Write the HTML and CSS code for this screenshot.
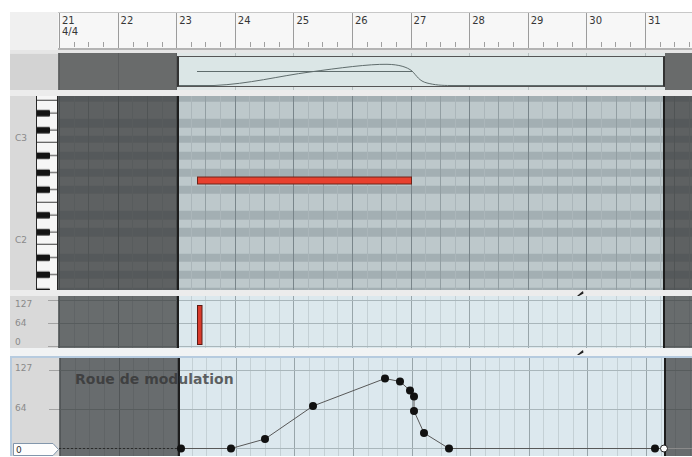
FILE: index.html
```html
<!DOCTYPE html>
<html lang="fr">
<head>
    <meta charset="UTF-8">
    <meta name="viewport" content="width=device-width, initial-scale=1.0">
    <title>Éditeur de pistes</title>
    <link rel="stylesheet" href="styles.css">
</head>
<body>
    <div class="editor">

        <!-- Bar ruler -->
        <div class="lane ruler-lane">
            <div class="lane-head"></div>
            <div class="lane-body ruler">
                <div class="bar"><span>21</span><span>4/4</span></div>
                <div class="bar"><span>22</span></div>
                <div class="bar"><span>23</span></div>
                <div class="bar"><span>24</span></div>
                <div class="bar"><span>25</span></div>
                <div class="bar"><span>26</span></div>
                <div class="bar"><span>27</span></div>
                <div class="bar"><span>28</span></div>
                <div class="bar"><span>29</span></div>
                <div class="bar"><span>30</span></div>
                <div class="bar"><span>31</span></div>
            </div>
        </div>
        <div class="divider ruler-edge"></div>

        <!-- Region overview -->
        <div class="lane overview-lane">
            <div class="lane-head"></div>
            <div class="lane-body">
                <div class="outside before"></div>
                <div class="inside">
                    <svg viewBox="0 0 484 29" preserveAspectRatio="none">
                        <path d="M18 14.5H233" fill="none" stroke="#5f6c6c" stroke-width="1"/>
                        <path d="M0 28.5H35C70 27 100 19 131 15C160 11 190 7 208 7.3C220 7.5 228 10 233 14C238 19 240 24 248 26C256 28 262 28.5 272 28.5H484" fill="none" stroke="#5f6c6c" stroke-width="1"/>
                    </svg>
                </div>
                <div class="outside after"></div>
            </div>
        </div>
        <div class="divider"></div>

        <!-- Piano roll -->
        <div class="lane roll-lane">
            <div class="lane-head">
                <div class="key-names">
                    <span>C3</span>
                    <span>C2</span>
                </div>
                <svg class="keys" width="22" height="194">
                    <defs>
                        <pattern id="octave" width="22" height="102" y="46.75" patternUnits="userSpaceOnUse">
                            <rect width="22" height="102" fill="#f6f6f6"/>
                            <path d="M0 59.5H22M0 101.5H22" stroke="#3a3a3a" stroke-width="1"/>
                            <path d="M14 12.75H22M14 29.75H22M14 46.75H22M14 72.25H22M14 89.25H22" stroke="#3a3a3a" stroke-width="1"/>
                            <g fill="#141414">
                                <rect y="9.75" width="14" height="6.5" rx="1"/>
                                <rect y="26.75" width="14" height="6.5" rx="1"/>
                                <rect y="43.75" width="14" height="6.5" rx="1"/>
                                <rect y="69.25" width="14" height="6.5" rx="1"/>
                                <rect y="86.25" width="14" height="6.5" rx="1"/>
                            </g>
                        </pattern>
                    </defs>
                    <rect width="22" height="194" fill="url(#octave)"/>
                    <path d="M0.5 0V194M21.5 0V194" stroke="#262626" stroke-width="1"/>
                </svg>
            </div>
            <div class="lane-body">
                <div class="outside before"></div>
                <div class="inside">
                    <svg viewBox="0 0 484 194" preserveAspectRatio="none">
                        <rect class="note" x="18.5" y="81" width="214" height="7"/>
                    </svg>
                </div>
                <div class="outside after"></div>
            </div>
        </div>
        <div class="divider">
            <svg class="grip" width="7" height="5"><path d="M0 5L4 1.5L6 0L6.5 2.5L2 5Z"/></svg>
        </div>

        <!-- Velocity -->
        <div class="lane velocity-lane">
            <div class="lane-head value-scale">
                <span>127</span>
                <span>64</span>
                <span>0</span>
            </div>
            <div class="lane-body">
                <div class="outside before"></div>
                <div class="inside">
                    <svg viewBox="0 0 484 52" preserveAspectRatio="none">
                        <rect class="velocity" x="18.5" y="9.5" width="4.5" height="39"/>
                    </svg>
                </div>
                <div class="outside after"></div>
            </div>
        </div>
        <div class="divider tall">
            <svg class="grip" width="7" height="5"><path d="M0 5L4 1.5L6 0L6.5 2.5L2 5Z"/></svg>
        </div>

        <!-- Modulation wheel automation -->
        <div class="lane mod-lane">
            <div class="lane-head">
                <span class="level top">127</span>
                <span class="level">64</span>
                <svg class="value-tag" width="46" height="13">
                    <path d="M0.5 0.5H40L45.5 6.5L40 12.5H0.5Z" fill="#fdfdfd" stroke="#8296ab"/>
                    <text x="3" y="10">0</text>
                </svg>
            </div>
            <div class="lane-body">
                <div class="outside before"></div>
                <div class="inside"></div>
                <div class="outside after"></div>
                <div class="lane-title">Roue de modulation</div>
                <svg class="automation" width="634" height="98">
                    <path d="M0 90.5H122" stroke="#2a2a2a" stroke-dasharray="2 2" fill="none"/>
                    <path d="M605 90.5H634" stroke="#8a8a8a" fill="none"/>
                    <polyline points="122,90.5 172,90.5 206,81 254,48 326,20.5 341,23.5 351,32.5 355,38.5 355,53 365,75 390,90.5 596,90.5 605,90.5" fill="none" stroke="#585858" stroke-width="1"/>
                    <g fill="#111">
                        <circle cx="122" cy="90.5" r="4"/>
                        <circle cx="172" cy="90.5" r="4"/>
                        <circle cx="206" cy="81" r="4"/>
                        <circle cx="254" cy="48" r="4"/>
                        <circle cx="326" cy="20.5" r="4"/>
                        <circle cx="341" cy="23.5" r="4"/>
                        <circle cx="351" cy="32.5" r="4"/>
                        <circle cx="355" cy="38.5" r="4"/>
                        <circle cx="355" cy="53" r="4"/>
                        <circle cx="365" cy="75" r="4"/>
                        <circle cx="390" cy="90.5" r="4"/>
                        <circle cx="596" cy="90.5" r="4"/>
                    </g>
                    <circle cx="605" cy="90.5" r="3.5" fill="#fff" stroke="#222"/>
                </svg>
            </div>
        </div>
    </div>
</body>
</html>
```

FILE: styles.css
```css
:root {
    --shade: rgba(48, 48, 48, 0.68);
    --edge: #1d1d1d;
    --label: #8a8a8a;
    --head: #d9d9d9;
}

html, body {
    margin: 0;
    overflow: hidden;
    background: #fff;
    font-family: 'DejaVu Sans', 'Liberation Sans', sans-serif;
}

.editor {
    width: 682px;
    height: 445px;
    padding: 12px 0 0 10px;
}

.lane {
    display: flex;
}

.lane-head {
    flex: 0 0 48px;
    box-sizing: border-box;
    background: var(--head);
}

.lane-body {
    flex: 1;
    display: flex;
    position: relative;
    overflow: hidden;
}

.outside {
    background: var(--shade);
}

.outside.before { flex: 0 0 119px; }
.outside.after { flex: 1; }

.inside {
    flex: 0 0 488px;
    box-sizing: border-box;
    border-left: 2px solid var(--edge);
    border-right: 2px solid var(--edge);
}

.inside svg {
    display: block;
    width: 100%;
    height: 100%;
}

.divider {
    height: 6px;
    background: #ececec;
    display: flex;
    align-items: center;
}

.grip {
    margin-left: 567px;
    fill: #222;
}

/* ruler */
.ruler-lane {
    height: 38px;
}

.ruler-lane .lane-head {
    background: #f0f0f0;
}

.ruler {
    box-sizing: border-box;
    padding-left: 1px;
    background: #f7f7f7;
    border-top: 1px solid #c8c8c8;
    border-bottom: 2px solid #b4b4b4;
}

.bar {
    flex: 0 0 58.6px;
    box-sizing: border-box;
    border-left: 1px solid #9c9c9c;
    padding: 2px 0 0 2px;
    display: flex;
    flex-direction: column;
    font-size: 10px;
    line-height: 11px;
    color: #363636;
    background: repeating-linear-gradient(90deg, transparent 0 13.65px, #a0a0a0 13.65px 14.65px) left bottom 1px / 100% 5px no-repeat;
}

.ruler-edge {
    height: 3px;
    background: #e6e6e6;
}

/* overview */
.overview-lane {
    height: 37px;
}

.overview-lane .lane-head {
    background: #d3d3d3;
    border-top: 1px solid #e4e4e4;
}

.overview-lane .lane-body {
    background:
        repeating-linear-gradient(90deg, #b6bfc0 0 1px, transparent 1px 58.6px) 1px 0,
        #e0e7e7;
}

.overview-lane .inside {
    margin: 3px 0;
    border-top: 1px solid #555;
    border-bottom: 1px solid #555;
    border-left-color: #333;
    border-right-color: #333;
    background: #dbe6e6;
}

/* piano roll */
.roll-lane {
    height: 194px;
}

.roll-lane .lane-head {
    display: flex;
}

.key-names {
    flex: 1;
    padding: 37px 0 0 5px;
    font-size: 9px;
    color: var(--label);
}

.key-names span {
    display: block;
    height: 102px;
    line-height: 11px;
}

.keys {
    display: block;
}

.roll-lane .lane-body {
    background:
        repeating-linear-gradient(90deg, #79858a 0 1px, transparent 1px 58.6px) 1px 0,
        repeating-linear-gradient(90deg, #929ea2 0 1px, transparent 1px 29.3px) 1px 0,
        repeating-linear-gradient(90deg, #abb6ba 0 1px, transparent 1px 14.65px) 1px 0,
        repeating-linear-gradient(180deg,
            #bdc8cb 0 8.5px, #a3afb3 8.5px 17px,
            #bdc8cb 17px 25.5px, #a3afb3 25.5px 34px,
            #bdc8cb 34px 42.5px, #a3afb3 42.5px 51px,
            #bdc8cb 51px 68px, #a3afb3 68px 76.5px,
            #bdc8cb 76.5px 85px, #a3afb3 85px 93.5px,
            #bdc8cb 93.5px 102px) 0 46.75px;
}

.note {
    fill: #e8402e;
    stroke: #6c2218;
    stroke-width: 1;
}

/* velocity */
.velocity-lane {
    height: 52px;
}

.value-scale {
    display: flex;
    flex-direction: column;
    justify-content: space-between;
    padding: 3px 0 0 5px;
    font-size: 9px;
    line-height: 11px;
    color: var(--label);
    background:
        linear-gradient(#a4a4a4, #a4a4a4) right 0 top 4px / 10px 1px no-repeat,
        linear-gradient(#a4a4a4, #a4a4a4) right 0 top 27px / 10px 1px no-repeat,
        linear-gradient(#a4a4a4, #a4a4a4) right 0 top 50px / 10px 1px no-repeat,
        var(--head);
}

.velocity-lane .lane-body {
    background:
        linear-gradient(#a9b6bb, #a9b6bb) 0 4px / 100% 1px no-repeat,
        linear-gradient(#a9b6bb, #a9b6bb) 0 27px / 100% 1px no-repeat,
        linear-gradient(#a9b6bb, #a9b6bb) 0 50px / 100% 1px no-repeat,
        repeating-linear-gradient(90deg, #98a5aa 0 1px, transparent 1px 58.6px) 1px 0,
        repeating-linear-gradient(90deg, #c4d0d5 0 1px, transparent 1px 14.65px) 1px 0,
        #dce8ed;
}

.velocity {
    fill: #d93a2b;
    stroke: #5c1a14;
    stroke-width: 1;
}

.divider.tall {
    height: 8px;
    background: #f1f3f4;
}

/* modulation */
.mod-lane {
    height: 100px;
    box-sizing: border-box;
    border-top: 2px solid #b6cbdf;
}

.mod-lane .lane-head {
    border-left: 2px solid #b6cbdf;
    padding-left: 3px;
    font-size: 9px;
    line-height: 11px;
    color: var(--label);
    background:
        linear-gradient(#a4a4a4, #a4a4a4) right 0 top 12px / 10px 1px no-repeat,
        linear-gradient(#a4a4a4, #a4a4a4) right 0 top 51px / 10px 1px no-repeat,
        var(--head);
}

.level {
    display: block;
    margin-top: 29px;
}

.level.top {
    margin-top: 5px;
}

.value-tag {
    display: block;
    margin: 29px 0 0 -2px;
    font-size: 9px;
    fill: #333;
}

.mod-lane .lane-body {
    background:
        linear-gradient(#a9b6bb, #a9b6bb) 0 12px / 100% 1px no-repeat,
        linear-gradient(#a9b6bb, #a9b6bb) 0 51px / 100% 1px no-repeat,
        linear-gradient(#a9b6bb, #a9b6bb) 0 90px / 100% 1px no-repeat,
        repeating-linear-gradient(90deg, #98a5aa 0 1px, transparent 1px 58.6px) 1px 0,
        repeating-linear-gradient(90deg, #c4d0d5 0 1px, transparent 1px 14.65px) 1px 0,
        #dce8ee;
}

.lane-title {
    position: absolute;
    left: 16px;
    top: 13px;
    font-size: 14px;
    font-weight: bold;
    line-height: 16px;
    color: rgba(50, 50, 50, 0.75);
    white-space: nowrap;
}

.automation {
    position: absolute;
    left: 0;
    top: 0;
}
```
